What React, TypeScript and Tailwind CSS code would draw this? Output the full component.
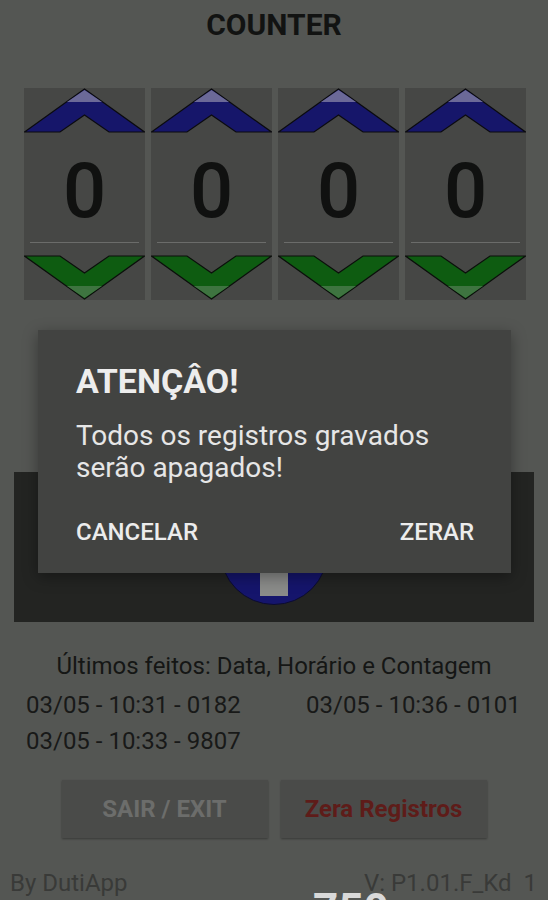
import React from 'react'

const font = { fontFamily: 'Roboto, "Noto Sans", sans-serif' }

const records = [
  '03/05 - 10:31 - 0182',
  '03/05 - 10:36 - 0101',
  '03/05 - 10:33 - 9807',
]

function UpArrow() {
  return (
    <svg width="121" height="45" viewBox="0 0 121 45" className="block">
      <polygon
        points="0.5,44 60.5,1 120.5,44 85,44 60.5,27 36,44"
        fill="#16166a"
        stroke="#0b0b0f"
        strokeWidth="1.2"
        strokeLinejoin="miter"
      />
      <polygon points="43,14 60.5,2 78,14" fill="#6b6998" />
    </svg>
  )
}

function DownArrow() {
  return (
    <svg width="121" height="45" viewBox="0 0 121 45" className="block">
      <polygon
        points="0.5,1 36,1 60.5,18 85,1 120.5,1 60.5,44"
        fill="#0e5c11"
        stroke="#0b0f0b"
        strokeWidth="1.2"
        strokeLinejoin="miter"
      />
      <polygon points="43,31 78,31 60.5,43" fill="#3e7440" />
    </svg>
  )
}

function DigitCell() {
  return (
    <div className="w-[121px] h-[212px] bg-[#464745] flex flex-col">
      <UpArrow />
      <div className="h-[109px] flex items-center justify-center pt-[6px]">
        <span className="text-[76px] leading-none font-medium text-[#101110]">0</span>
      </div>
      <div className="mx-[6px] h-px bg-[#6b6c6a]" />
      <div className="h-[12px]" />
      <DownArrow />
    </div>
  )
}

export default function App() {
  return (
    <div className="relative w-[548px] h-[900px] overflow-hidden bg-[#545653]" style={font}>
      {/* underlying screen (dimmed) */}
      <div className="pt-[11px] text-center text-[30px] leading-[28px] font-bold text-[#121312]">
        COUNTER
      </div>

      <div className="mt-[49px] pl-[24px] flex gap-[6px]">
        <DigitCell />
        <DigitCell />
        <DigitCell />
        <DigitCell />
      </div>

      <div className="mt-[172px] mx-[14px] h-[150px] bg-[#232422] flex items-center justify-center pt-[8px]">
        <div className="w-[108px] h-[108px] rounded-full bg-[#15156c] border border-[#0c0c30] flex items-center justify-center">
          <div className="w-[28px] h-[90px] bg-[#8a8b89]" />
        </div>
      </div>

      <div className="mt-[31px] text-center text-[24px] leading-[26px] text-[#151615]">
        Últimos feitos: Data, Horário e Contagem
      </div>

      <div className="mt-[8px] pl-[26px] grid grid-cols-[280px_1fr] text-[24px] leading-[36px] text-[#181918]">
        {records.map((r) => (
          <div key={r}>{r}</div>
        ))}
      </div>

      <div className="mt-[21px] flex justify-center gap-[13px]">
        <div className="w-[206px] h-[58px] bg-[#4a4b49] shadow-[0_1px_2px_rgba(0,0,0,0.35)] flex items-center justify-center text-[24px] font-bold text-[#6c6d6b]">
          SAIR / EXIT
        </div>
        <div className="w-[206px] h-[58px] bg-[#4a4b49] shadow-[0_1px_2px_rgba(0,0,0,0.35)] flex items-center justify-center text-[24px] font-bold text-[#5e1c19]">
          Zera Registros
        </div>
      </div>

      <div className="mt-[31px] pl-[10px] pr-[11px] flex justify-between text-[24px] leading-[28px] text-[#393a38]">
        <span>By DutiApp</span>
        <span>V: P1.01.F_Kd&nbsp; 1</span>
      </div>

      {/* dialog */}
      <div className="absolute left-[38px] top-[330px] w-[473px] h-[243px] bg-[#424341] shadow-[0_4px_14px_rgba(0,0,0,0.35)] pt-[31px] pl-[38px] pr-[37px]">
        <div className="text-[34px] leading-[40px] font-bold text-[#ededed]">ATENÇÂO!</div>
        <div className="mt-[19px] text-[28px] leading-[32px] text-[#e6e6e6]">
          Todos os registros gravados
          <br />
          serão apagados!
        </div>
        <div className="mt-[34px] flex justify-between text-[24px] leading-[28px] font-medium text-[#ececec]">
          <span>CANCELAR</span>
          <span>ZERAR</span>
        </div>
      </div>

      {/* toast peeking at the bottom */}
      <div className="absolute left-[313px] top-[888px] text-[44px] leading-none font-bold text-[#d9d9d9]">
        750
      </div>
    </div>
  )
}
